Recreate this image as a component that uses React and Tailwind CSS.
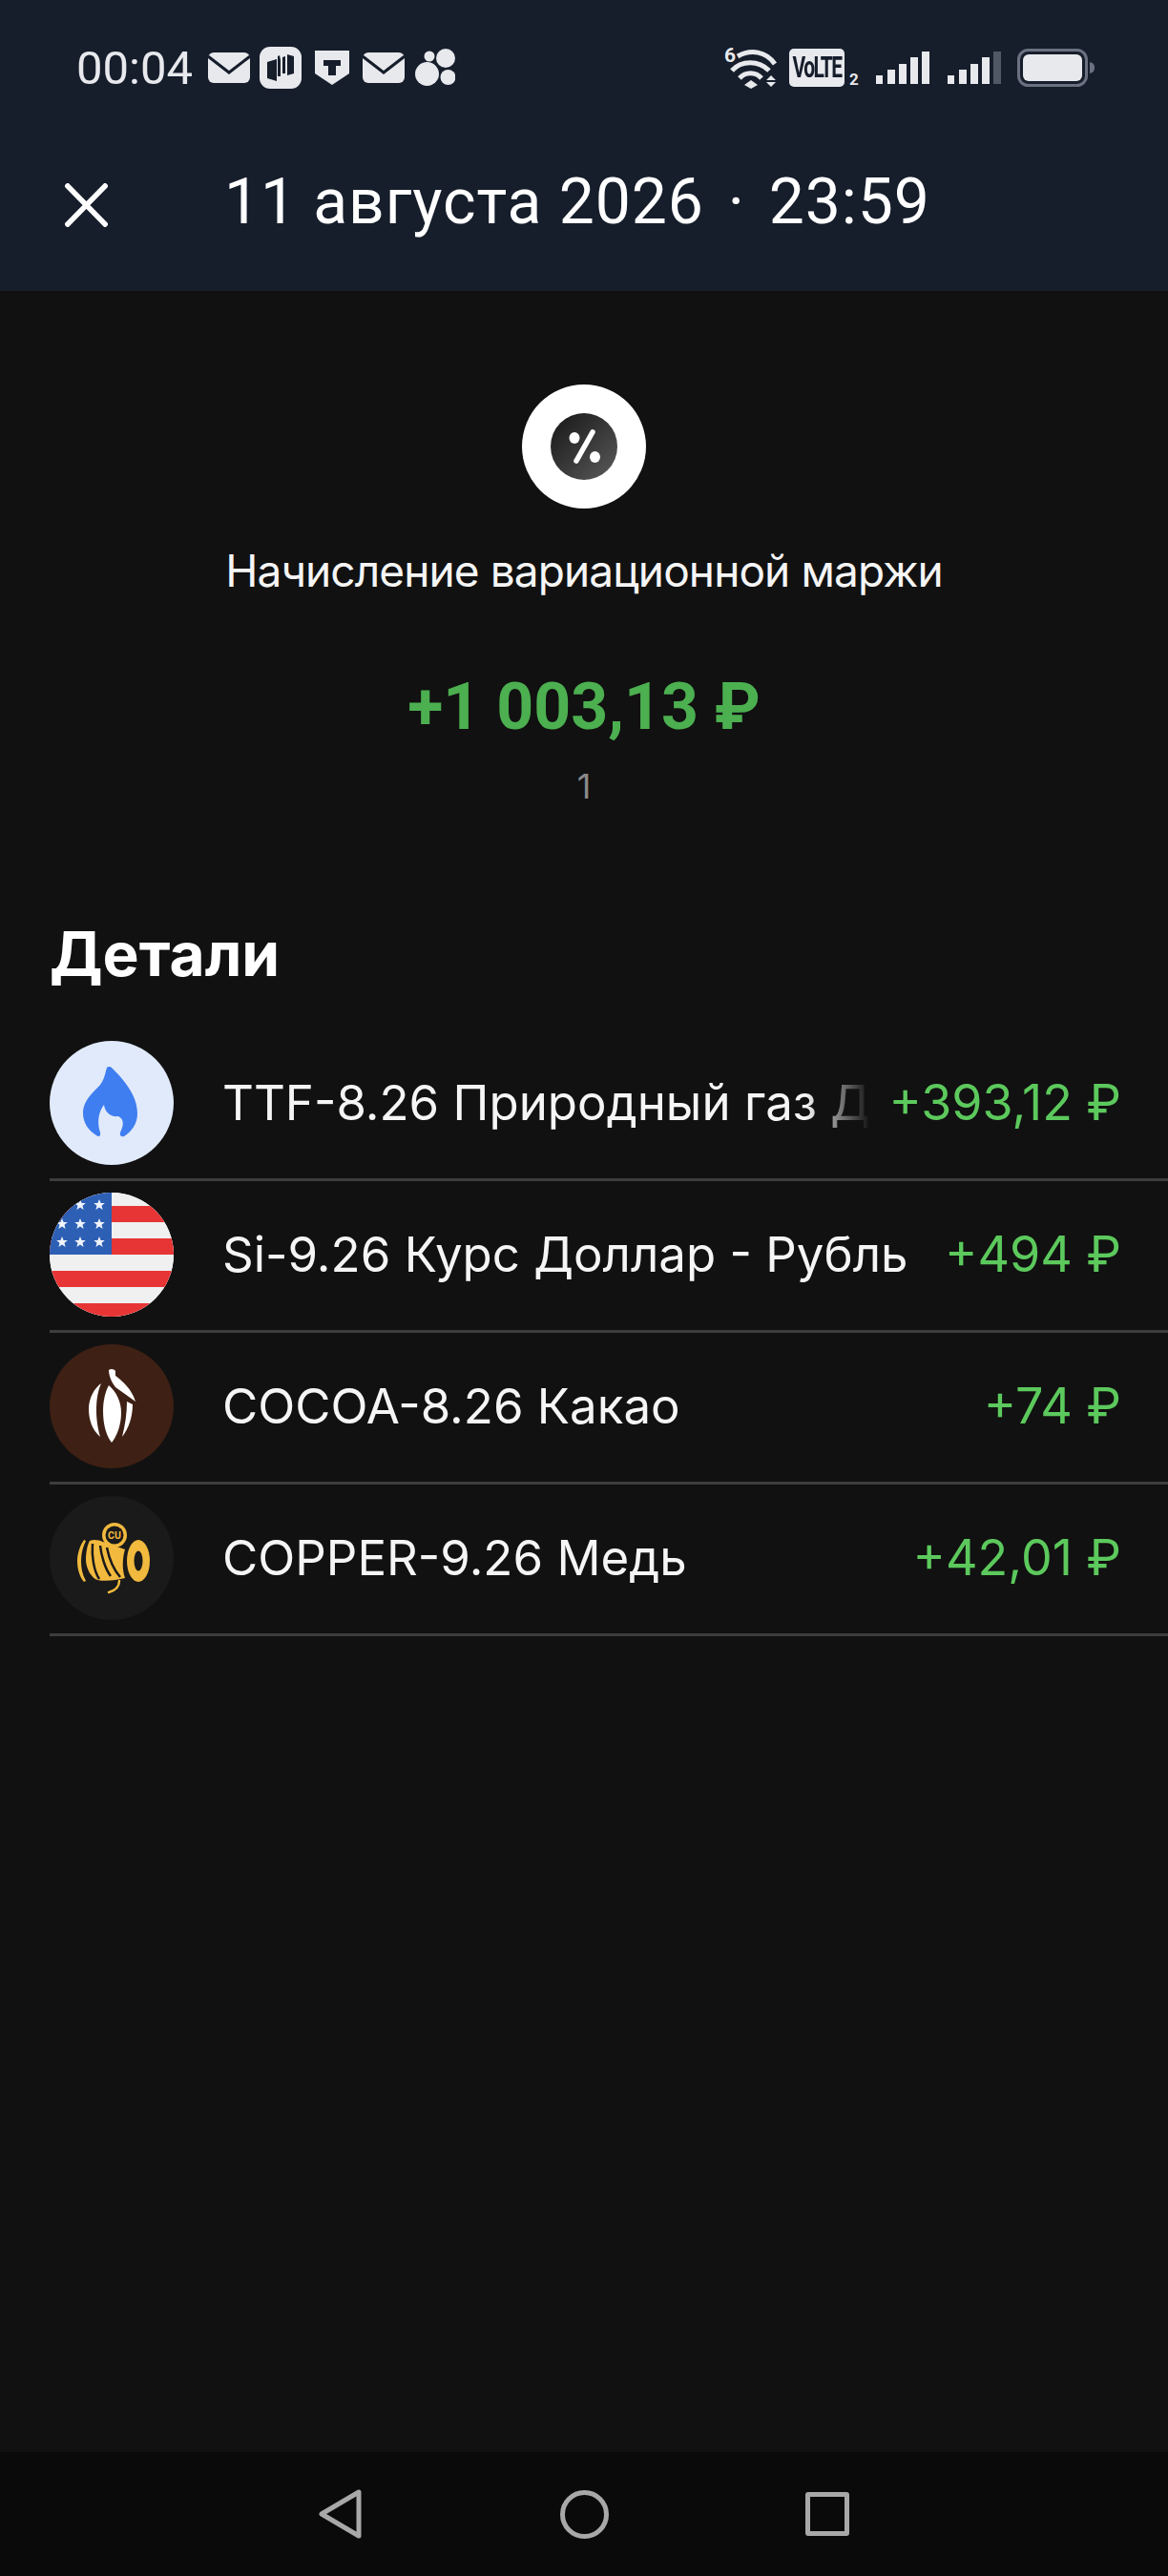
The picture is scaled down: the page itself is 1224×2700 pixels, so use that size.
import React from 'react';

const fg = '#e7e9ed';
const headerBg = '#161d2b';

const Envelope = ({ className }) => (
  <svg className={className} width="44" height="32" viewBox="0 0 44 32">
    <rect width="44" height="32" rx="6" fill={fg} />
    <path d="M0 4 L22 21 L44 4" fill="none" stroke={headerBg} strokeWidth="3" />
  </svg>
);

const AppIcon = () => (
  <svg className="ml-[10px]" width="44" height="44" viewBox="0 0 44 44">
    <rect width="44" height="44" rx="11" fill={fg} />
    <path d="M8 16 L18 13 L18 36 L8 33Z M19 10 L21 9 L22 14 L22 31 L19 31Z M24 11 L27 10 L27 28 L24 28Z M29 8 L36 10 L36 28 L29 30Z" fill={headerBg} />
  </svg>
);

const Shield = () => (
  <svg className="ml-[14px]" width="36" height="36" viewBox="0 0 36 36">
    <path d="M0 0 H36 V24 L18 36 L0 24Z" fill={fg} />
    <path d="M9 10 H27 V16 H22 V26 H14 V16 H9Z" fill={headerBg} />
  </svg>
);

const Dots = () => (
  <svg className="ml-[11px]" width="42" height="40" viewBox="0 0 42 40" fill={fg}>
    <circle cx="12.5" cy="26.5" r="12.5" />
    <circle cx="32" cy="10" r="10" />
    <circle cx="15" cy="8" r="5.5" />
    <circle cx="34.5" cy="30" r="8" />
  </svg>
);

const Wifi = () => (
  <svg className="overflow-visible" width="54" height="44" viewBox="0 0 54 44" fill="none" stroke={fg} strokeWidth="5">
    <text x="0" y="16" fill={fg} stroke="none" fontSize="21" fontWeight="700" fontFamily="Roboto, sans-serif">6</text>
    <path d="M14 10 C28 2 44 5 53 18" />
    <path d="M8 25 C18 14 36 14 47 25" />
    <path d="M16 33 C22 26 33 26 39 33" />
    <path d="M21 40 L28 35 L35 40 L28 44Z" fill={fg} stroke="none" />
    <path d="M44 35 L49 30 L54 35Z M44 37 L54 37 L49 42Z" fill={fg} stroke="none" />
  </svg>
);

const Signal = ({ dimLast, className }) => (
  <svg className={className} width="56" height="34" viewBox="0 0 56 34">
    <rect x="0" y="25" width="7" height="9" fill={fg} />
    <rect x="12" y="19" width="8" height="15" fill={fg} />
    <rect x="24" y="13" width="8" height="21" fill={fg} />
    <rect x="36" y="6" width="8" height="28" fill={fg} />
    <rect x="48" y="0" width="8" height="34" fill={dimLast ? '#515865' : fg} />
  </svg>
);

const Battery = () => (
  <svg className="ml-[17px]" width="81" height="40" viewBox="0 0 81 40">
    <rect x="1.5" y="1.5" width="71" height="37" rx="10" fill="none" stroke="#6b7180" strokeWidth="3" />
    <rect x="6" y="6" width="62" height="28" rx="6" fill={fg} />
    <path d="M76 14 C80 15 81 17 81 20 C81 23 80 25 76 26Z" fill="#6b7180" />
  </svg>
);

const StatusBar = () => (
  <div className="flex items-center justify-between h-[48px] pl-[80px] pr-[77px]">
    <div className="flex items-center">
      <span className="w-[123px] font-['Roboto',sans-serif] text-[49px] leading-none text-[#e7e9ed]">00:04</span>
      <Envelope className="ml-[15px]" />
      <AppIcon />
      <Shield />
      <Envelope className="ml-[14px]" />
      <Dots />
    </div>
    <div className="flex items-center">
      <Wifi />
      <div className="ml-[14px] flex h-[40px] w-[58px] items-center justify-center rounded-[5px] bg-[#e7e9ed]">
        <span className="scale-y-[1.5] font-['Roboto',sans-serif] text-[21px] font-bold leading-none tracking-[-1.6px] text-[#161d2b]">VoLTE</span>
      </div>
      <span className="ml-[5px] mt-[24px] w-[12px] font-['Roboto',sans-serif] text-[17px] font-bold leading-none text-[#e7e9ed]">2</span>
      <Signal className="ml-[16px]" />
      <Signal dimLast className="ml-[19px]" />
      <Battery />
    </div>
  </div>
);

const FlameIcon = () => (
  <svg width="130" height="130" viewBox="0 0 130 130">
    <path
      d="M60 28 Q62 26 65 28 C76 39 92 56 92 76 C92 87 86 95 78 100 C75 101 73 99 74 96 C78 88 78 82 72 79 C64 80 58 75 57 67 C52 73 49 84 53 96 C54 100 51 101 49 99 C41 94 35 86 35 76 C35 62 46 54 53 46 C57 41 58 35 60 28Z"
      fill="#3f7ef0"
    />
  </svg>
);

const stars = [
  [32, 13], [52, 13],
  [13, 33], [32, 33], [52, 33],
  [13, 52], [32, 52], [52, 52],
];

const FlagIcon = () => (
  <svg width="130" height="130" viewBox="0 0 130 130">
    <rect width="130" height="130" fill="#f0f0f0" />
    <rect y="14" width="130" height="17" fill="#e73535" />
    <rect y="48" width="130" height="17" fill="#e73535" />
    <rect y="82" width="130" height="17" fill="#e73535" />
    <rect y="116" width="130" height="14" fill="#e73535" />
    <rect width="65" height="65" fill="#2d5fb5" />
    {stars.map(([x, y]) => (
      <path
        key={`${x}-${y}`}
        transform={`translate(${x} ${y})`}
        d="M0 -6 L1.6 -1.9 L5.8 -1.9 L2.5 0.8 L3.6 5 L0 2.6 L-3.6 5 L-2.5 0.8 L-5.8 -1.9 L-1.6 -1.9Z"
        fill="#f0f4fb"
      />
    ))}
  </svg>
);

const CocoaIcon = () => (
  <svg width="130" height="130" viewBox="0 0 130 130" fill="#ffffff">
    <path d="M62 27 C64 25 68 26 69 28 L69 33 C77 39 86 47 90 60 L69 45 C66 41 62 34 62 27Z" />
    <path d="M62 43 C70 50 75 60 75 72 C75 85 70 97 65 103 C60 97 56 85 56 70 C56 60 58 50 62 43Z" />
    <path d="M54 41 C50 50 49 60 49 70 C49 80 51 90 53 97 C45 90 41 80 41 68 C41 56 47 46 54 41Z" />
    <path d="M81 60 L87 63 C87 76 83 88 76 97 C79 85 81 73 81 60Z" />
  </svg>
);

const CopperIcon = () => (
  <svg width="130" height="130" viewBox="0 0 130 130" fill="#f1b93e">
    <path d="M36 46 C31 53 29 62 29 68 C29 76 31 84 36 90 L38 89 C34 82 33 75 33 68 C33 60 35 53 38 47Z" />
    <path d="M42 47 C46 45 52 46 56 48 L79 56 C76 66 76 78 79 86 C70 88 60 90 50 88 C44 86 38 76 38 67 C38 58 40 50 42 47Z" />
    <path d="M45 50 C44 62 46 78 52 87 M53 52 C54 62 58 76 64 84 M60 54 C62 64 66 76 74 85" stroke="#1a1a1a" strokeWidth="2.5" fill="none" />
    <ellipse cx="93" cy="68" rx="12" ry="22" />
    <ellipse cx="93" cy="68" rx="4.5" ry="10.5" fill="#1a1a1a" />
    <circle cx="68" cy="41" r="13" />
    <circle cx="68" cy="41" r="9.5" fill="#1a1a1a" />
    <text x="68" y="45" textAnchor="middle" fontSize="10.5" fontWeight="700" fontFamily="Roboto, sans-serif">CU</text>
    <path d="M73 89 C73 95 69 99 62 101" stroke="#f1b93e" strokeWidth="2.5" fill="none" strokeLinecap="round" />
  </svg>
);

const rows = [
  { name: 'TTF-8.26 Природный газ Д', amount: '+393,12 ₽', bg: 'bg-[#e1eafa]', Icon: FlameIcon, faded: true },
  { name: 'Si-9.26 Курс Доллар - Рубль', amount: '+494 ₽', bg: 'bg-[#f0f0f0]', Icon: FlagIcon },
  { name: 'COCOA-8.26 Какао', amount: '+74 ₽', bg: 'bg-[#3e2014]', Icon: CocoaIcon },
  { name: 'COPPER-9.26 Медь', amount: '+42,01 ₽', bg: 'bg-[#1a1a1a]', Icon: CopperIcon },
];

const DetailRow = ({ name, amount, bg, Icon, faded }) => (
  <div className="flex items-center border-b-[3px] border-[#3d3d3d] pb-[14px] pt-[12px] pr-[49px]">
    <div className={`h-[130px] w-[130px] shrink-0 overflow-hidden rounded-full ${bg}`}>
      <Icon />
    </div>
    <div className="ml-[51px] flex min-w-0 flex-1 items-center justify-between">
      {faded ? (
        <span className="whitespace-nowrap text-[51px] text-[#f5f5f5] [mask-image:linear-gradient(to_right,#000_90%,transparent_100%)]">{name}</span>
      ) : (
        <span className="whitespace-nowrap text-[51px] text-[#f5f5f5]">{name}</span>
      )}
      <span className="whitespace-nowrap text-[52px] text-[#5cc95c]">{amount}</span>
    </div>
  </div>
);

export default function App() {
  return (
    <div className="flex h-[2700px] w-[1224px] flex-col overflow-hidden bg-[#111111] font-['Inter',sans-serif]">
      {/* Top bar */}
      <header className="h-[305px] shrink-0 bg-[#161d2b] pt-[47px]">
        <StatusBar />
        <div className="mt-[84px] flex h-[72px] items-center pl-[68px]">
          <svg width="45" height="46" viewBox="0 0 45 46" stroke="#ffffff" strokeWidth="5.5">
            <path d="M1 1 L44 45 M44 1 L1 45" />
          </svg>
          <h1 className="ml-[122px] whitespace-nowrap pb-[6px] font-['Roboto',sans-serif] text-[66px] font-normal leading-none tracking-[0.9px] text-white">
            11 августа 2026<span className="mx-[25px]">·</span>23:59
          </h1>
        </div>
      </header>

      <main className="flex-1">
        <section className="flex flex-col items-center pt-[98px]">
          <div className="flex h-[130px] w-[130px] items-center justify-center rounded-full bg-white">
            <div className="h-[70px] w-[70px] rounded-full bg-linear-to-br from-[#171717] to-[#5c5c5c]">
              <svg width="70" height="70" viewBox="0 0 70 70" fill="#ffffff">
                <ellipse cx="25" cy="26" rx="5.5" ry="6" />
                <ellipse cx="46.5" cy="46" rx="5.5" ry="6" />
                <path d="M44 20 L27 50" stroke="#ffffff" strokeWidth="5.5" strokeLinecap="round" />
              </svg>
            </div>
          </div>
          <p className="mt-[37px] text-[46px] leading-[56px] tracking-[-0.9px] text-[#f5f5f5]">Начисление вариационной маржи</p>
          <p className="mt-[76px] font-['Roboto',sans-serif] text-[68px] font-bold leading-[78px] text-[#4caf50]">+1 003,13 ₽</p>
          <p className="mt-[22px] text-[36px] leading-[44px] text-[#8a8a8a]">1</p>
        </section>

        <section className="pl-[52px] pt-[118px]">
          <h2 className="text-[64px] font-bold leading-[72px] text-white">Детали</h2>
          <div className="mt-[43px] leading-[60px]">
            {rows.map((row) => (
              <DetailRow key={row.name} {...row} />
            ))}
          </div>
        </section>
      </main>

      {/* Android nav bar */}
      <nav className="flex h-[130px] shrink-0 items-center justify-center bg-[#0a0a0a]">
        <div className="flex w-[459px] justify-center">
          <svg width="46" height="52" viewBox="0 0 46 52" fill="none" stroke="#a8a8a8" strokeWidth="5" strokeLinejoin="round">
            <path d="M3 26 L42 3 V49Z" />
          </svg>
        </div>
        <div className="h-[51px] w-[51px] rounded-full border-[5px] border-[#a8a8a8]" />
        <div className="flex w-[459px] justify-center">
          <div className="h-[46px] w-[46px] rounded-[3px] border-[5px] border-[#a8a8a8]" />
        </div>
      </nav>
    </div>
  );
}
